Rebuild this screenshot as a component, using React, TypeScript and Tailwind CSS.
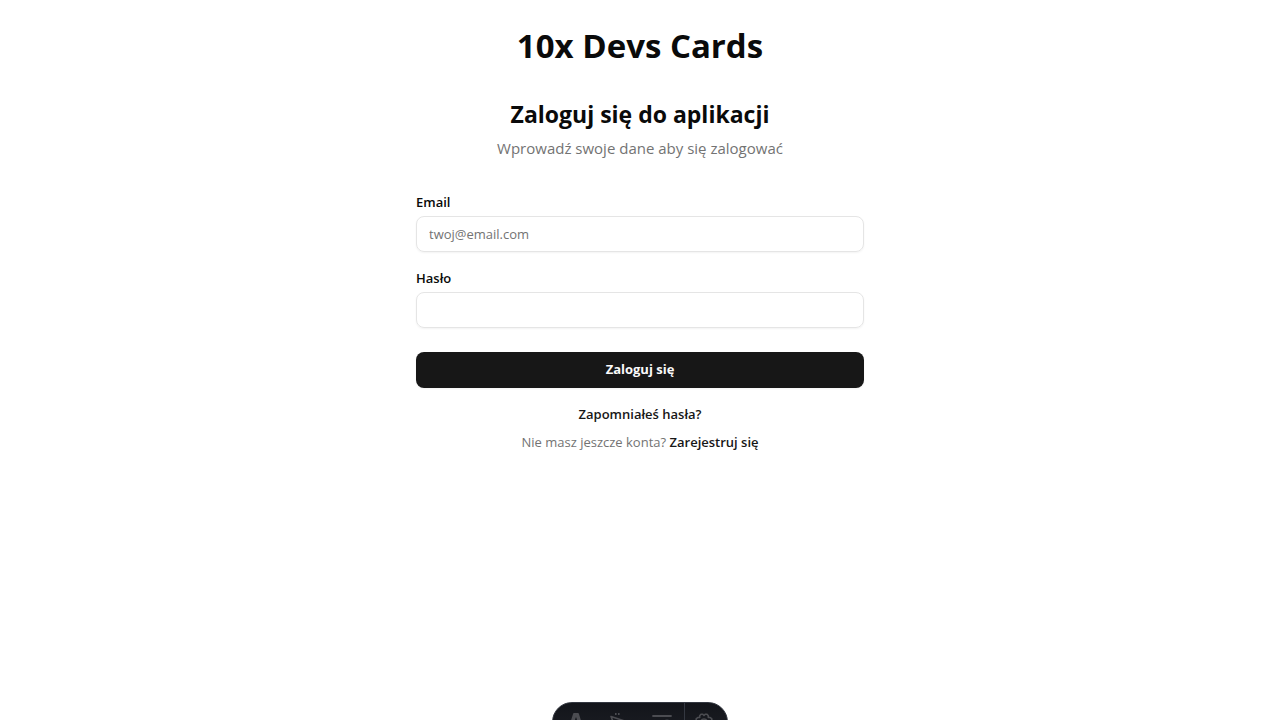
import React from "react";

function Field({ id, label, type, placeholder }: { id: string; label: string; type: string; placeholder?: string }) {
  return (
    <div className="flex flex-col gap-1">
      <label htmlFor={id} className="text-[13px] leading-5 font-semibold">
        {label}
      </label>
      <input
        id={id}
        type={type}
        placeholder={placeholder}
        className="h-9 w-full rounded-lg border border-[#e5e5e5] bg-transparent px-3 py-1 text-[13px] shadow-xs outline-none placeholder:text-[#737373] focus:border-[#a1a1a1]"
      />
    </div>
  );
}

function ToolButton({ label, children }: { label: string; children: React.ReactNode }) {
  return (
    <button type="button" aria-label={label} className="flex flex-1 items-center justify-center text-[#4b4c51]">
      {children}
    </button>
  );
}

function DevToolbar() {
  return (
    <div className="fixed inset-x-0 bottom-0 flex h-[18px] justify-center overflow-hidden">
      <div className="flex h-10 w-44 overflow-hidden rounded-full border border-[#343841] bg-linear-to-b from-[#13151a] to-[#1d1f26]">
        <div className="flex w-[131px]">
          <ToolButton label="Menu">
            <svg viewBox="0 0 20 20" className="size-5" fill="currentColor">
              <path d="M9 1h4c.5 0 .8.3.9.7L18 15c-1.500-.7-2.900-1-4.400-1.300L11.400 5.700c-.1-.4-.7-.4-.8 0L8.400 13.700C6.900 13.900 5.400 14.300 4 15L8.100 1.700c.1-.4.4-.7.9-.7Z" />
              <path d="M7.700 14.800c2 1 5 1 6.900 0 .3 2-1.300 2.400-2 3.900-.9-1.400-2.300-1.400-2.600.2-1.700-.8-2.800-2.300-2.300-4.100Z" />
            </svg>
          </ToolButton>
          <ToolButton label="Inspect">
            <svg viewBox="0 0 20 20" className="size-5" fill="none" stroke="currentColor" strokeWidth="1.600" strokeLinejoin="round">
              <path d="M6.800 1v2M9.800 1v2" />
              <path d="M2 4.500 15 8.800 9.500 11.500 7 17 2 4.500Z" />
            </svg>
          </ToolButton>
          <ToolButton label="Audit">
            <svg viewBox="0 0 20 20" className="size-5" fill="none" stroke="currentColor" strokeWidth="1.800" strokeLinecap="round">
              <path d="M1 4h18M1 10h8M1 16h7" />
              <circle cx="15" cy="12.300" r="4" />
              <path d="m18 15.300 1.500 1.700" />
            </svg>
          </ToolButton>
        </div>
        <div className="w-px bg-[#343841]" />
        <div className="flex flex-1 pr-1">
          <ToolButton label="Settings">
            <svg viewBox="0 0 20 20" className="size-5" fill="none" stroke="currentColor" strokeWidth="1.600" strokeLinejoin="round">
              <path d="M7 2.200h1.800L10 3.500l1.200-1.300H13l1.300 1.500v1.800h1.900l1.600 1.400v1.800L16.500 10l1.300 1.300v1.800l-1.600 1.400h-1.900v1.800L13 17.800h-1.800L10 16.500l-1.200 1.300H7l-1.300-1.500v-1.800H3.800l-1.600-1.400v-1.800L3.500 10 2.200 8.700V6.900l1.600-1.400h1.900V3.700Z" />
              <circle cx="10" cy="10" r="3" />
            </svg>
          </ToolButton>
        </div>
      </div>
    </div>
  );
}

export default function App() {
  return (
    <div className="min-h-screen bg-white font-['Segoe_UI','Open_Sans','Noto_Sans',sans-serif] text-[#0a0a0a]">
      <main className="mx-auto w-full max-w-md pt-6">
        <h1 className="text-center text-[33px] leading-[44px] font-bold">10x Devs Cards</h1>
        <section className="mt-7">
          <header className="flex flex-col gap-1 text-center">
            <h2 className="text-[23px] leading-9 font-bold">Zaloguj się do aplikacji</h2>
            <p className="text-[15px] leading-6 text-[#737373]">Wprowadź swoje dane aby się zalogować</p>
          </header>
          <form className="mt-8 flex flex-col" onSubmit={(e) => e.preventDefault()}>
            <div className="flex flex-col gap-4">
              <Field id="email" label="Email" type="email" placeholder="twoj@email.com" />
              <Field id="password" label="Hasło" type="password" />
            </div>
            <button type="submit" className="mt-6 h-9 rounded-lg bg-[#171717] text-[13px] font-bold text-[#fafafa] shadow-xs">
              Zaloguj się
            </button>
          </form>
          <div className="mt-4 flex flex-col gap-2 text-center text-[13px] leading-5">
            <a href="#reset" className="font-semibold text-[#171717]">
              Zapomniałeś hasła?
            </a>
            <p className="text-[#737373]">
              Nie masz jeszcze konta?{" "}
              <a href="#register" className="font-semibold text-[#171717]">
                Zarejestruj się
              </a>
            </p>
          </div>
        </section>
      </main>
      <DevToolbar />
    </div>
  );
}
